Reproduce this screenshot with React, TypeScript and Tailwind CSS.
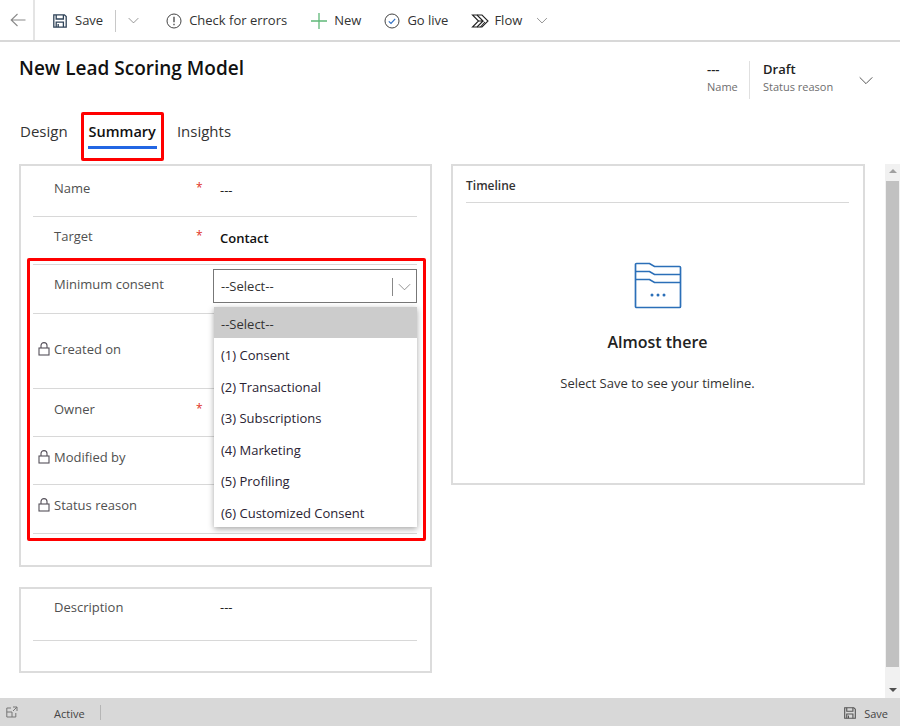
import type { ReactNode } from "react";

const options = [
  "(1) Consent",
  "(2) Transactional",
  "(3) Subscriptions",
  "(4) Marketing",
  "(5) Profiling",
  "(6) Customized Consent",
];

function Chevron({ className }: { className: string }) {
  return (
    <svg viewBox="0 0 16 10" className={className} fill="none" stroke="currentColor" strokeWidth="1">
      <path d="M1 1.5 8 8.5 15 1.5" />
    </svg>
  );
}

function SaveIcon({ className }: { className: string }) {
  return (
    <svg viewBox="0 0 14 14" className={className} fill="none" stroke="currentColor" strokeWidth="1.3">
      <path d="M.8.8h10.6l1.8 1.8v10.6H.8z" />
      <path d="M3.2 1v4h7.2V1M3.2 13V8.2h7.2V13" />
      <path d="M5.2 10v3" />
    </svg>
  );
}

function Lock() {
  return (
    <svg viewBox="0 0 12 14" className="h-[14px] w-3 text-[#55505a]" fill="none" stroke="currentColor" strokeWidth="1.1">
      <rect x="1" y="6" width="10" height="7" />
      <path d="M3 6V3.6a3 3 0 0 1 6 0V6" />
    </svg>
  );
}

function Tool({ icon, label, gap }: { icon: ReactNode; label: string; gap: string }) {
  return (
    <div className={`flex items-center ${gap}`}>
      {icon}
      <span>{label}</span>
    </div>
  );
}

function Row({
  label,
  height,
  lock,
  required,
  top,
  children,
}: {
  label: string;
  height: string;
  lock?: boolean;
  required?: boolean;
  top: string;
  children?: ReactNode;
}) {
  return (
    <div className={`ml-[12px] mr-[13px] flex border-b border-[#d8d8d8] ${height} ${top}`}>
      <div className="flex h-5 w-[21px] items-center justify-start pl-[5px]">{lock && <Lock />}</div>
      <div className="h-5 w-[142px] leading-5 text-[#505050]">{label}</div>
      <div className="h-5 w-[24px] text-[12px] leading-[20px] text-[#e0301e]">{required && "*"}</div>
      <div className="min-w-0 flex-1">{children}</div>
    </div>
  );
}

export default function App() {
  return (
    <div className="relative flex h-[726px] w-[900px] flex-col overflow-hidden bg-white font-['Open_Sans',sans-serif] text-[13px] text-[#333]">
      {/* command bar */}
      <div className="flex h-[42px] shrink-0 items-center border-b-2 border-[#d8d8d8]">
        <div className="flex h-10 w-[35px] items-center justify-center border-r-2 border-[#e4e4e4] pl-[2px]">
          <svg viewBox="0 0 16 14" className="h-[14px] w-4 text-[#8a8a8a]" fill="none" stroke="currentColor" strokeWidth="1.1">
            <path d="M7.5 1 1.2 7l6.3 6M1.2 7H15.5" />
          </svg>
        </div>
        <div className="flex items-center pl-[18px] pt-[1px]">
          <Tool gap="gap-[8px]" icon={<SaveIcon className="h-[14px] w-[14px] text-[#2f4358]" />} label="Save" />
          <div className="ml-3 h-[22px] w-px bg-[#c8c8c8]" />
          <Chevron className="ml-[12px] h-[7px] w-[11px] text-[#666]" />
          <div className="ml-[27px]">
            <Tool
              gap="gap-[7px]"
              icon={
                <svg viewBox="0 0 16 16" className="h-4 w-4 text-[#444]" fill="none" stroke="currentColor" strokeWidth="1">
                  <circle cx="8" cy="8" r="7" />
                  <path d="M8 3.8v5.4M8 10.8v1.4" strokeWidth="1.3" />
                </svg>
              }
              label="Check for errors"
            />
          </div>
          <div className="ml-[24px]">
            <Tool
              gap="gap-[7px]"
              icon={
                <svg viewBox="0 0 16 16" className="h-4 w-4 text-[#5fb878]" fill="none" stroke="currentColor" strokeWidth="1.3">
                  <path d="M8 0v16M0 8h16" />
                </svg>
              }
              label="New"
            />
          </div>
          <div className="ml-[23px]">
            <Tool
              gap="gap-[7px]"
              icon={
                <svg viewBox="0 0 16 16" className="h-4 w-4 text-[#444]" fill="none" stroke="currentColor" strokeWidth="1">
                  <circle cx="8" cy="8" r="7" />
                  <path d="M4.8 8.3 7 10.5l4.2-4.7" stroke="#2f6fc4" strokeWidth="1.2" />
                </svg>
              }
              label="Go live"
            />
          </div>
          <div className="ml-[23px]">
            <Tool
              gap="gap-[5px]"
              icon={
                <svg viewBox="0 0 18 14" className="h-[14px] w-[18px] text-[#222]" fill="none" stroke="currentColor" strokeWidth="1.1">
                  <path d="M1.5 1H11l6 6-6 6H1.5l6-6z" />
                  <path d="M6 1l6 6H7.5M6 13l6-6M9.5 13l4.5-5" />
                </svg>
              }
              label="Flow"
            />
          </div>
          <Chevron className="ml-[14px] h-[7px] w-[12px] text-[#666]" />
        </div>
      </div>

      {/* record header */}
      <div className="flex h-[58px] shrink-0 items-start justify-between pl-[19px] pr-[26px]">
        <h1 className="pt-[12px] text-[19px] leading-[28px] font-semibold text-[#111]">New Lead Scoring Model</h1>
        <div className="flex items-start pt-[19px]">
          <div className="-mt-px w-[42px] text-[11px] leading-[18px]">
            <div className="text-[13px] font-semibold text-[#222]">---</div>
            <div className="text-[#6e6e6e]">Name</div>
          </div>
          <div className="h-[38px] w-px bg-[#e0e0e0]" />
          <div className="-mt-px w-[108px] pl-[13px] text-[11px] leading-[18px]">
            <div className="text-[13px] font-semibold text-[#222]">Draft</div>
            <div className="whitespace-nowrap text-[#6e6e6e]">Status reason</div>
          </div>
          <Chevron className="mt-[15px] h-[9px] w-4 text-[#444]" />
        </div>
      </div>

      {/* tabs */}
      <div className="flex h-[64px] shrink-0 items-start pl-5 pt-[19px] text-[15px] leading-[24px] text-[#333]">
        <span>Design</span>
        <span className="ml-[20px] mt-[1px] border-b-[3px] border-[#2266e3] px-[1px] pb-[2px] text-[14.5px] font-semibold text-[#111]">Summary</span>
        <span className="ml-[20px]">Insights</span>
      </div>

      <div className="flex min-h-0 flex-1">
        <div className="flex w-[885px] items-start gap-[19px] pl-[19px]">
          <div className="flex w-[413px] shrink-0 flex-col gap-[20px]">
            <div className="h-[403px] border-2 border-[#dcdcdc]">
              <Row label="Name" height="h-[51px]" top="pt-[12px]" required>
                <div className="pt-[2px] leading-5 text-[#222]">---</div>
              </Row>
              <Row label="Target" height="h-[48px]" top="pt-[9px]" required>
                <div className="pt-[2px] leading-5 font-semibold text-[#111]">Contact</div>
              </Row>
              <Row label="Minimum consent" height="h-[49px]" top="pt-[9px]" />
              <Row label="Created on" height="h-[75px]" top="pt-[25px]" lock />
              <Row label="Owner" height="h-[48px]" top="pt-[10px]" required />
              <Row label="Modified by" height="h-[48px]" top="pt-[10px]" lock />
              <Row label="Status reason" height="h-[49px]" top="pt-[10px]" lock />
            </div>
            <div className="h-[86px] border-2 border-[#dcdcdc]">
              <Row label="Description" height="h-[52px]" top="pt-[8px]">
                <div className="leading-5 text-[#222]">---</div>
              </Row>
            </div>
          </div>

          <div className="h-[321px] w-[414px] shrink-0 border-2 border-[#dcdcdc] pl-[13px] pr-[14px]">
            <div className="h-[37px] border-b border-[#d8d8d8] pt-[11px] text-[12px] leading-[18px] font-semibold text-[#333]">
              Timeline
            </div>
            <div className="flex flex-col items-center pt-[58px]">
              <svg viewBox="0 0 48 48" className="h-[48px] w-[48px] text-[#2b6fb8]" fill="none" stroke="currentColor" strokeWidth="1.7">
                <path d="M1.5 3.5a1 1 0 0 1 1-1h13l5 3h25a1 1 0 0 1 1 1v39a1 1 0 0 1-1 1h-43a1 1 0 0 1-1-1z" />
                <path d="M1.5 10.5h14l5 3h26.5M1.5 18.5h14l5 3h26.5" />
                <circle cx="18" cy="34" r="1.5" fill="currentColor" stroke="none" />
                <circle cx="24" cy="34" r="1.5" fill="currentColor" stroke="none" />
                <circle cx="30" cy="34" r="1.5" fill="currentColor" stroke="none" />
              </svg>
              <div className="pt-[21px] text-[16px] leading-[24px] font-semibold text-[#222]">Almost there</div>
              <div className="pt-[20px] text-[13px] leading-[18px] text-[#333]">Select Save to see your timeline.</div>
            </div>
          </div>
        </div>

        <div className="relative w-[15px] shrink-0 bg-[#f1f1f1]">
          <div className="absolute left-[4px] top-[5px] h-0 w-0 border-x-[4px] border-b-[4px] border-x-transparent border-b-[#a0a0a0]" />
          <div className="absolute left-[1px] top-[17px] h-[486px] w-[13px] bg-[#c1c1c1]" />
          <div className="absolute bottom-[6px] left-[4px] h-0 w-0 border-x-[4px] border-t-[4px] border-x-transparent border-t-[#505050]" />
        </div>
      </div>

      {/* status bar */}
      <div className="flex h-7 shrink-0 items-center bg-[#d8d8d8] pt-[4px] text-[11px] text-[#444]">
        <svg viewBox="0 0 12 12" className="ml-[6px] -mt-[5px] h-3 w-3 text-[#777]" fill="none" stroke="currentColor" strokeWidth="1">
          <path d="M5 2H.8v9h9V7M.8 6H6v5M7 1h4v4M11 1 7 5" />
        </svg>
        <span className="ml-[36px]">Active</span>
        <div className="ml-[15px] -mt-[4px] h-[15px] w-px bg-[#b5b5b5]" />
        <div className="ml-auto flex items-center gap-2 pr-[12px]">
          <SaveIcon className="-mt-[2px] h-3 w-3 text-[#555]" />
          <span>Save</span>
        </div>
      </div>

      {/* select control and open list */}
      <div className="absolute left-[213px] top-[269px] flex h-[34px] w-[204px] items-center border border-[#777] bg-white pl-[7px] pt-[1px] text-[#333]">
        <span className="flex-1">--Select--</span>
        <div className="h-[18px] w-px bg-[#888]" />
        <Chevron className="mx-[5px] h-[8px] w-[13px] text-[#777]" />
      </div>
      <div className="absolute left-[214px] top-[307px] w-[203px] bg-white shadow-[0_2px_6px_rgba(0,0,0,0.35)]">
        <div className="flex h-[31px] items-center bg-[#cccccc] pl-[7px] pt-[4px]">--Select--</div>
        {options.map((option) => (
          <div key={option} className="flex h-[31.5px] items-center pl-[7px] pt-[4px] text-[#2a2333]">
            {option}
          </div>
        ))}
      </div>

      {/* red callouts */}
      <div className="absolute left-[81px] top-[112px] h-[49px] w-[83px] rounded-[2px] border-[3px] border-[#ff0000]" />
      <div className="absolute left-[27px] top-[258px] h-[283px] w-[399px] rounded-[2px] border-[3px] border-[#ff0000]" />
    </div>
  );
}
